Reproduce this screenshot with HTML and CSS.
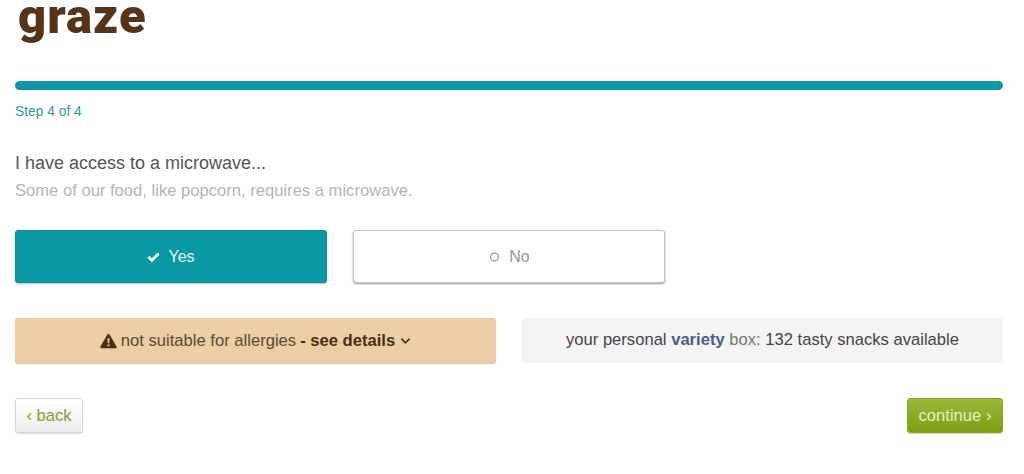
FILE: index.html
```html
<!DOCTYPE html>
<html lang="en">
<head>
    <meta charset="UTF-8">
    <meta name="viewport" content="width=device-width, initial-scale=1.0">
    <title>graze - Step 4 of 4</title>
    <link rel="stylesheet" href="styles.css">
</head>
<body>
    <div class="page">
        <div class="logo">graze</div>
        <div class="progress"></div>
        <div class="step">Step 4 of 4</div>

        <div class="question">I have access to a microwave...</div>
        <div class="hint">Some of our food, like popcorn, requires a microwave.</div>

        <div class="choices">
            <button class="choice selected">
                <svg class="choice-icon" viewBox="0 0 14 14"><path d="M1.5 7.5 L5.3 11 L12.5 3.8" fill="none" stroke="#fff" stroke-width="3"/></svg>
                Yes
            </button>
            <button class="choice">
                <svg class="choice-icon" viewBox="0 0 14 14"><circle cx="7" cy="7.5" r="4.2" fill="none" stroke="#999" stroke-width="1.3"/></svg>
                No
            </button>
        </div>

        <div class="info-row">
            <div class="info allergy">
                <svg class="warn" viewBox="0 0 18 16"><path fill-rule="evenodd" d="M9 0.5 C9.6 0.5 10 0.8 10.3 1.3 L17.5 13.8 C18 14.7 17.4 15.7 16.4 15.7 L1.6 15.7 C0.6 15.7 0 14.7 0.5 13.8 L7.7 1.3 C8 0.8 8.4 0.5 9 0.5 Z M7.9 5 L8.2 10.4 L9.8 10.4 L10.1 5 Z M7.9 11.6 L7.9 13.6 L10.1 13.6 L10.1 11.6 Z" fill="#4a2f14"/></svg>
                <span>not suitable for allergies</span>
                <strong>- see details</strong>
                <svg class="chevron" viewBox="0 0 12 8"><path d="M1.5 1.5 L6 6 L10.5 1.5" fill="none" stroke="#4a2f14" stroke-width="1.8"/></svg>
            </div>
            <div class="info variety">your personal <strong>variety</strong> <span class="box-word">box:</span> 132 tasty snacks available</div>
        </div>

        <div class="nav">
            <a class="btn back" href="#">&lsaquo; back</a>
            <a class="btn continue" href="#">continue &rsaquo;</a>
        </div>
    </div>
</body>
</html>
```

FILE: styles.css
```css
body {
    font-family: "Liberation Sans", Arial, sans-serif;
    background-color: #fff;
    color: #444;
    margin: 0;
}

.page {
    padding: 0 21px 0 15px;
    height: 474px;
    box-sizing: border-box;
    overflow: hidden;
}

.logo {
    height: 81px;
    padding-left: 3px;
    font-family: Roboto, sans-serif;
    font-size: 49px;
    font-weight: 900;
    line-height: 33px;
    letter-spacing: 1px;
    color: #55341a;
}

.progress {
    height: 9px;
    background-color: #0a98a2;
    border-radius: 5px;
}

.step {
    margin-top: 14px;
    font-size: 13.8px;
    line-height: 16px;
    color: #2f9c9c;
}

.question {
    margin-top: 33px;
    font-size: 18px;
    line-height: 21px;
    color: #555;
}

.hint {
    margin-top: 8px;
    font-size: 16.6px;
    line-height: 18px;
    color: #b5b5b5;
}

.choices {
    display: flex;
    gap: 26px;
    margin-top: 30px;
}

.choice {
    display: flex;
    align-items: center;
    justify-content: center;
    gap: 8px;
    width: 312px;
    height: 53px;
    padding: 0;
    font-family: inherit;
    font-size: 16px;
    color: #999;
    background-color: #fff;
    border: 1px solid #c4c4c4;
    border-radius: 3px;
    box-shadow: 0 1px 2px rgba(0, 0, 0, 0.4);
}

.choice.selected {
    color: #e4f6f6;
    background-color: #0a98a2;
    border-color: #0a8f99;
    box-shadow: 0 1px 2px rgba(0, 0, 0, 0.25);
}

.choice-icon {
    width: 13px;
    height: 13px;
}

.info-row {
    display: flex;
    gap: 26px;
    margin-top: 35px;
}

.info {
    flex: 1;
    height: 45px;
    font-size: 16.6px;
    border-radius: 3px;
}

.allergy {
    display: flex;
    align-items: center;
    justify-content: center;
    gap: 4px;
    background-color: #edcda3;
    color: #5c4a33;
    box-shadow: 0 1px 1px rgba(120, 80, 30, 0.35);
}

.allergy strong {
    color: #4a2f14;
}

.warn {
    width: 17px;
    height: 16px;
}

.chevron {
    width: 11px;
    height: 8px;
    margin-left: 1px;
}

.variety {
    line-height: 43px;
    text-align: center;
    background-color: #f4f4f5;
    color: #444;
}

.variety strong {
    color: #4d5c8a;
}

.box-word {
    color: #777;
}

.nav {
    display: flex;
    justify-content: space-between;
    margin-top: 35px;
}

.btn {
    display: block;
    height: 35px;
    box-sizing: border-box;
    font-size: 16.6px;
    line-height: 33px;
    text-align: center;
    text-decoration: none;
    border-radius: 3px;
}

.back {
    width: 68px;
    color: #7fa32a;
    background: linear-gradient(#fff, #eeeeee);
    border: 1px solid #d6d6d6;
    box-shadow: 0 1px 1px rgba(0, 0, 0, 0.15);
}

.continue {
    width: 96px;
    color: #e6f2c4;
    background: linear-gradient(#9cb93a, #7c9e12);
    border: 1px solid #8aa824;
    box-shadow: 0 1px 1px rgba(0, 0, 0, 0.2);
}
```
